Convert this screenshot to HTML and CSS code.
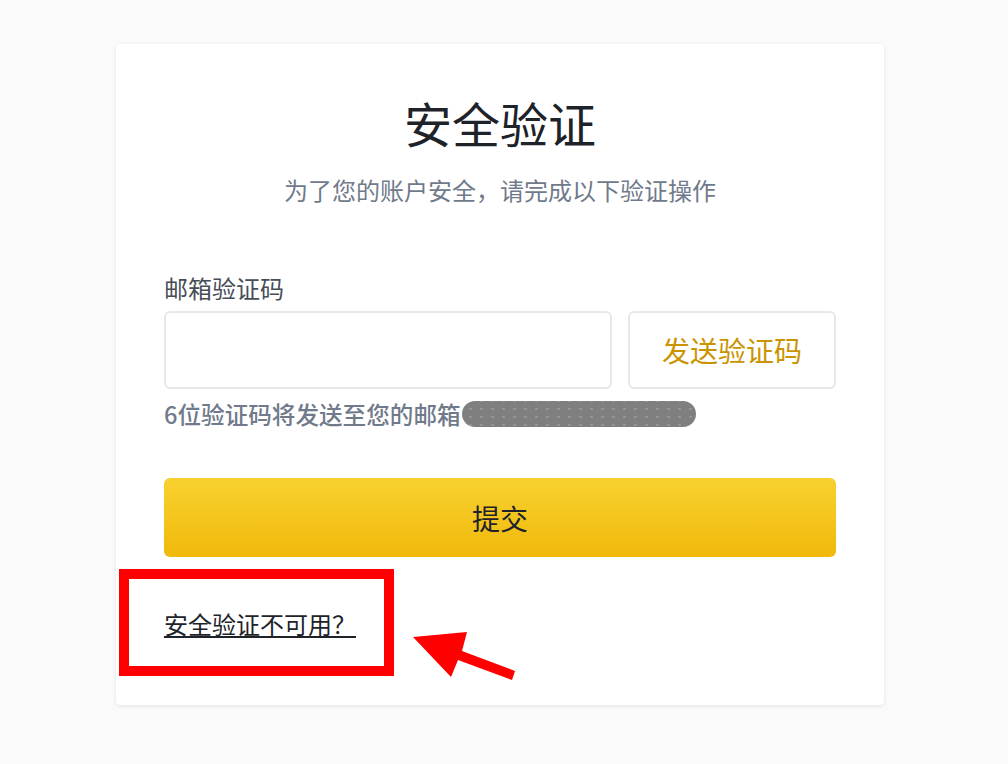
FILE: index.html
```html
<!DOCTYPE html>
<html lang="zh-CN">
<head>
    <meta charset="UTF-8">
    <meta name="viewport" content="width=device-width, initial-scale=1.0">
    <title>安全验证</title>
    <link rel="stylesheet" href="styles.css">
</head>
<body>
    <section class="card">
        <h1 class="title">安全验证</h1>
        <p class="subtitle">为了您的账户安全，请完成以下验证操作</p>

        <form class="verify-form" onsubmit="event.preventDefault()">
            <label class="field-label" for="emailCode">邮箱验证码</label>
            <div class="code-row">
                <input type="text" id="emailCode" class="code-input">
                <button type="button" class="send-btn">发送验证码</button>
            </div>
            <p class="hint">6位验证码将发送至您的邮箱<span class="masked"></span></p>
            <button type="submit" class="submit-btn">提交</button>
        </form>

        <a href="#" class="help-link">安全验证不可用？</a>
    </section>

    <!-- annotation marks -->
    <div class="mark-box"></div>
    <svg class="mark-arrow" width="1008" height="764" viewBox="0 0 1008 764">
        <polygon points="413,637 467,632 462,651 515,671 512,680 458,660 451,677" fill="#ff0000"/>
    </svg>
</body>
</html>
```

FILE: styles.css
```css
body {
    font-family: "Noto Sans CJK SC", "Noto Sans", sans-serif;
    background-color: #fafafa;
    margin: 0;
    position: relative;
    min-height: 764px;
}
.card {
    width: 768px;
    box-sizing: border-box;
    margin: 44px 0 0 116px;
    padding: 50px 48px 65px;
    background-color: white;
    border-radius: 4px;
    box-shadow: 0 1px 4px rgba(0, 0, 0, 0.1);
}
.title {
    margin: 0;
    font-size: 48px;
    line-height: 56px;
    font-weight: 400;
    color: #1e2329;
    text-align: center;
}
.subtitle {
    margin: 24px 0 0;
    font-size: 24px;
    line-height: 32px;
    color: #707a8a;
    text-align: center;
}
.verify-form {
    display: flex;
    flex-direction: column;
}
.field-label {
    margin-top: 66px;
    font-size: 24px;
    line-height: 32px;
    color: #474d57;
}
.code-row {
    display: flex;
    gap: 16px;
    margin-top: 7px;
}
.code-input {
    flex: 1;
    height: 78px;
    box-sizing: border-box;
    border: 2px solid #e6e8ea;
    border-radius: 6px;
    outline: none;
    font-size: 24px;
    padding: 0 16px;
}
.send-btn {
    width: 208px;
    height: 78px;
    box-sizing: border-box;
    border: 2px solid #e6e8ea;
    border-radius: 6px;
    background-color: white;
    color: #c99400;
    font-family: inherit;
    font-size: 28px;
    cursor: pointer;
}
.hint {
    margin: 10px 0 0;
    font-size: 23.6px;
    line-height: 30px;
    font-weight: 500;
    color: #707a8a;
    display: flex;
    align-items: center;
}
.masked {
    display: inline-block;
    width: 234px;
    height: 26px;
    margin-left: 1px;
    border-radius: 13px;
    background-color: #7f7f7f;
    background-image: radial-gradient(circle, rgba(255, 255, 255, 0.18) 1px, transparent 1.5px);
    background-size: 11px 8px;
    background-position: 3px 4px;
}
.submit-btn {
    margin-top: 49px;
    height: 79px;
    border: none;
    border-radius: 6px;
    background: linear-gradient(180deg, #f8d12f 0%, #f0b90b 100%);
    color: #1e2329;
    font-family: inherit;
    font-size: 28px;
    cursor: pointer;
}
.help-link {
    display: inline-block;
    margin-top: 51px;
    font-size: 24px;
    line-height: 32px;
    color: #1e2329;
    text-decoration: underline;
    text-underline-offset: 2px;
}
.mark-box {
    position: absolute;
    left: 119px;
    top: 569px;
    width: 275px;
    height: 107px;
    box-sizing: border-box;
    border: 10px solid #ff0000;
}
.mark-arrow {
    position: absolute;
    left: 0;
    top: 0;
    pointer-events: none;
}
```
